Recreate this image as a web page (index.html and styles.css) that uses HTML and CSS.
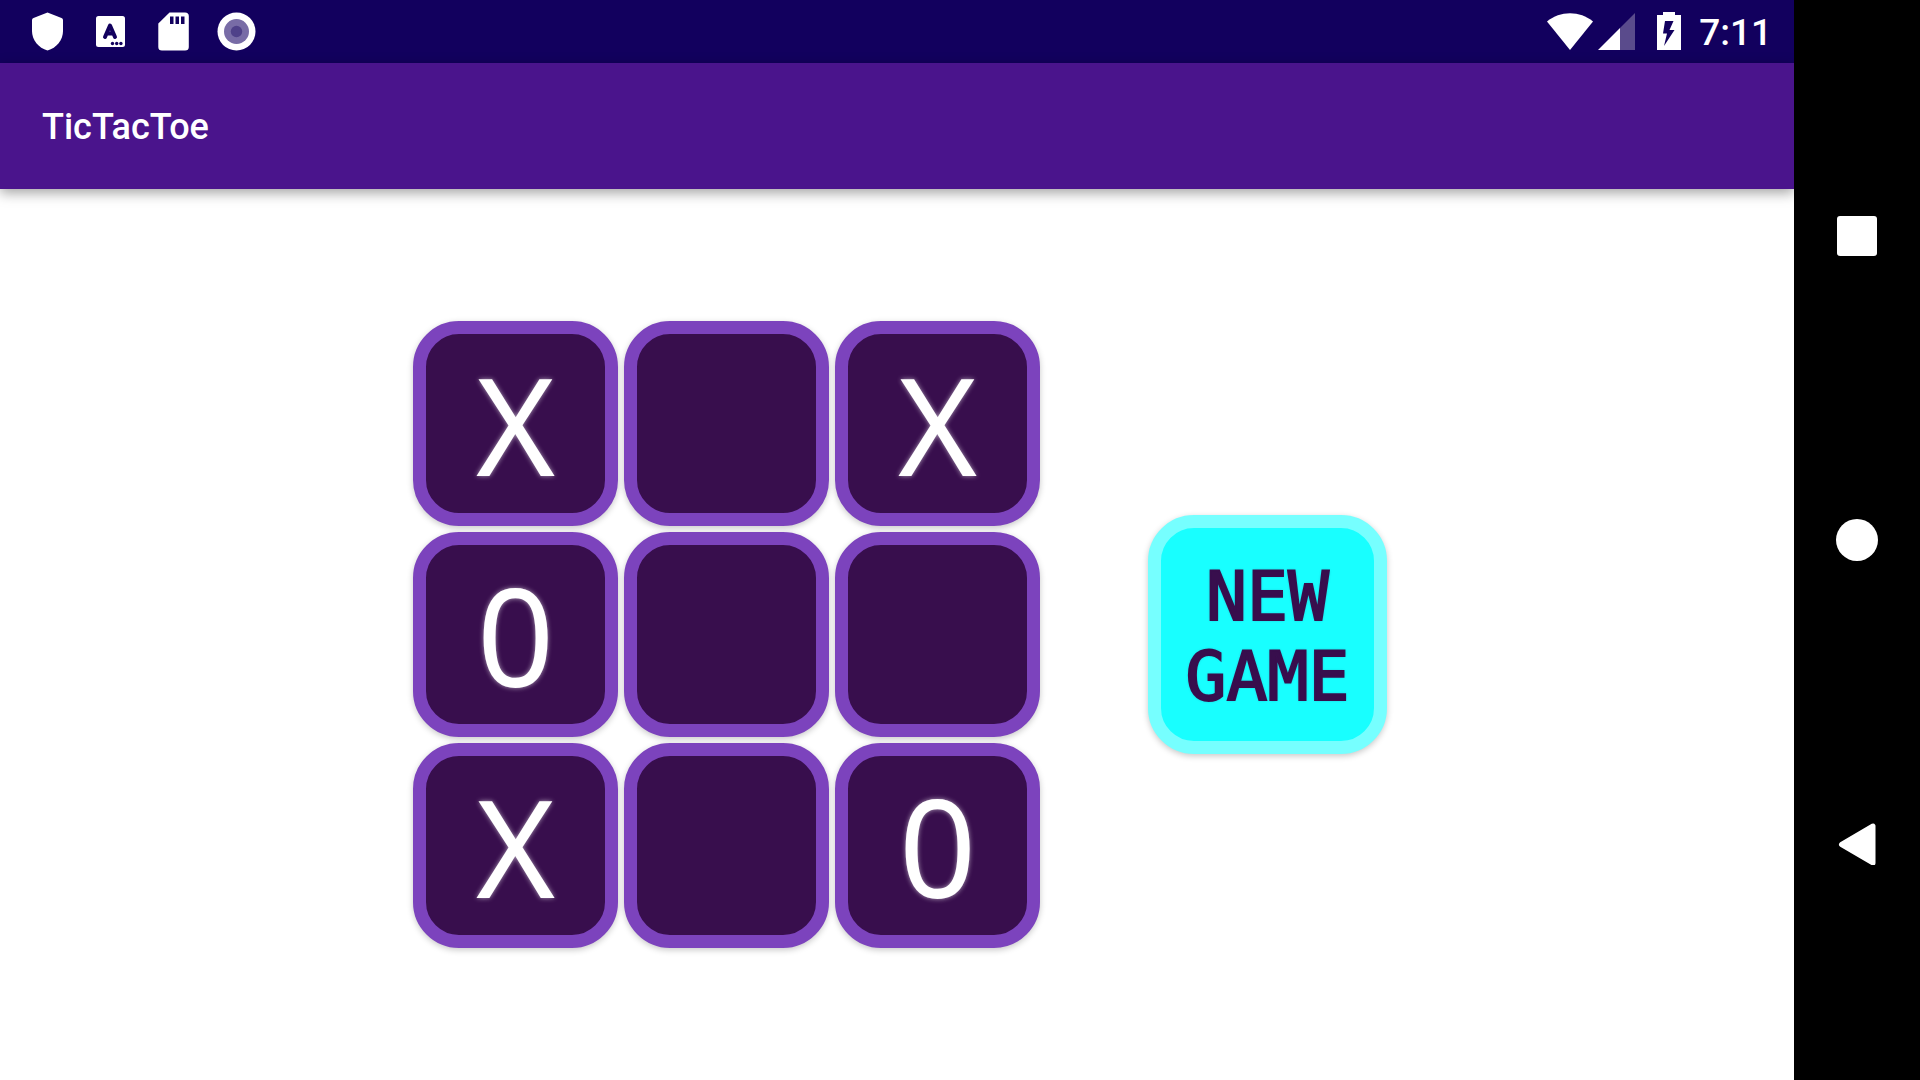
FILE: index.html
```html
<!DOCTYPE html>
<html lang="en">
<head>
<meta charset="utf-8">
<meta name="viewport" content="width=device-width, initial-scale=1">
<title>TicTacToe</title>
<link rel="stylesheet" href="styles.css">
</head>
<body>
<div class="device">
  <div class="screen">
    <div class="status-bar">
      <div class="status-icons">
        <svg class="status-icon" viewBox="0 0 63 63" aria-hidden="true"><path fill="#fff" d="M31.500 12.500L45.500 18Q47 18.600 47 20V31C47 40 40.500 48 31.500 50.500C22.500 48 16 40 16 31V20Q16 18.600 17.500 18Z"/></svg>
        <svg class="status-icon" viewBox="0 0 63 63" aria-hidden="true"><rect x="17" y="16" width="29" height="31" rx="2.500" fill="#fff"/><path d="M26 37L31 25.500L36 37M28 33.500H34" fill="none" stroke="#12005e" stroke-width="4" stroke-linecap="round" stroke-linejoin="round"/><g fill="#12005e"><circle cx="33.500" cy="43.500" r="1.700"/><circle cx="37.700" cy="43.500" r="1.700"/><circle cx="41.900" cy="43.500" r="1.700"/></g></svg>
        <svg class="status-icon" viewBox="0 0 63 63" aria-hidden="true"><path fill="#fff" d="M27.500 12.500H43Q46.800 12.500 46.800 16V47Q46.800 50.500 43 50.500H20Q16.300 50.500 16.300 47V23.500Z"/><path fill="#12005e" d="M28 16.500h3.500v7.500h-3.500zM33.500 16.500h3.500v7.500h-3.500zM39 16.500h3.500v7.500h-3.500z"/></svg>
        <svg class="status-icon" viewBox="0 0 63 63" aria-hidden="true"><circle cx="31.500" cy="31.500" r="19" fill="#fff"/><circle cx="31.500" cy="31.500" r="12.500" fill="#786ca6"/><circle cx="31.500" cy="31.500" r="5.700" fill="#4f4189"/></svg>
      </div>
      <div class="status-system">
        <svg class="system-icons" viewBox="0 0 136 63" aria-hidden="true"><path fill="#fff" d="M0 21.500C13 10.500 33 10.500 46 21.500L23 50Z"/><path fill="#5a4b8c" d="M88 13V50H73V28Z"/><path fill="#fff" d="M51 50L73 28V50Z"/><path fill="#fff" d="M110 15H116V12H128V15H134V50H110Z"/><path fill="#12005e" d="M118 21H126.500L122.500 30H127.500L117 46L120 33.500H116Z"/></svg>
        <time class="clock">7:11</time>
      </div>
    </div>
    <header class="app-bar"><h1 class="app-title">TicTacToe</h1></header>
    <main class="game">
      <div class="board">
        <button class="cell">X</button>
        <button class="cell" aria-label="Empty"></button>
        <button class="cell">X</button>
        <button class="cell">0</button>
        <button class="cell" aria-label="Empty"></button>
        <button class="cell" aria-label="Empty"></button>
        <button class="cell">X</button>
        <button class="cell" aria-label="Empty"></button>
        <button class="cell">0</button>
      </div>
      <button class="new-game">NEW GAME</button>
    </main>
  </div>
  <nav class="nav-bar" aria-label="System">
    <button class="nav-button" aria-label="Recent apps"><svg class="nav-icon" viewBox="0 0 42 42"><rect x="1" y="1" width="40" height="40" rx="3" fill="#fff"/></svg></button>
    <button class="nav-button" aria-label="Home"><svg class="nav-icon" viewBox="0 0 42 42"><circle cx="21" cy="21" r="21" fill="#fff"/></svg></button>
    <button class="nav-button" aria-label="Back"><svg class="nav-icon" viewBox="0 0 42 42"><path d="M5.500 21.500L37 3V40Z" fill="#fff" stroke="#fff" stroke-width="5" stroke-linejoin="round"/></svg></button>
  </nav>
</div>
</body>
</html>
```
FILE: styles.css
```css
* {
  box-sizing: border-box;
}

body {
  margin: 0;
  background: #fff;
  font-family: Roboto, sans-serif;
}

button {
  margin: 0;
  padding: 0;
  border: 0;
  background: none;
  cursor: pointer;
}

.device {
  display: flex;
  min-height: 100vh;
}

.screen {
  flex: 1;
  display: flex;
  flex-direction: column;
}

.status-bar {
  display: flex;
  justify-content: space-between;
  height: 63px;
  padding: 0 22px 0 16px;
  background: #12005e;
  color: #fff;
}

.status-icons {
  display: flex;
}

.status-icon {
  width: 63px;
  height: 63px;
}

.status-system {
  display: flex;
  gap: 16px;
}

.system-icons {
  width: 136px;
  height: 63px;
}

.clock {
  font-size: 37px;
  font-weight: 500;
  line-height: 66px;
}

.app-bar {
  display: flex;
  align-items: center;
  height: 126px;
  padding: 2px 42px 0;
  background: #4a148c;
  box-shadow: 0 4px 12px rgba(0, 0, 0, 0.36);
}

.app-title {
  margin: 0;
  color: #fff;
  font-size: 36px;
  font-weight: 500;
}

.game {
  flex: 1;
  display: flex;
  align-items: center;
  justify-content: center;
  gap: 108px;
  padding-left: 6px;
}

.board {
  display: grid;
  grid-template-columns: repeat(3, 205px);
  grid-auto-rows: 205px;
  gap: 6px;
}

.cell,
.new-game {
  border: 13px solid #7c43bd;
  border-radius: 46px;
  box-shadow: 0 2px 6px rgba(0, 0, 0, 0.22);
}

.cell {
  padding-top: 2px;
  background: #380e4d;
  color: #fff;
  font: 400 135px/177px "Noto Sans", sans-serif;
  text-shadow: 0 0 5px rgba(255, 255, 255, 0.6);
}

.new-game {
  width: 239px;
  height: 239px;
  padding-top: 4px;
  border-color: #76ffff;
  background: #18ffff;
  color: #380e4d;
  font: 400 68px/80px "DejaVu Sans Mono", monospace;
  -webkit-text-stroke: 2px #380e4d;
  text-shadow: 0 0 3px rgba(56, 14, 77, 0.4);
}

.nav-bar {
  display: flex;
  flex-direction: column;
  width: 126px;
  padding: 84px 0;
  background: #000;
}

.nav-button {
  flex: 1;
  display: flex;
  align-items: center;
  justify-content: center;
}

.nav-icon {
  width: 42px;
  height: 42px;
}
```
